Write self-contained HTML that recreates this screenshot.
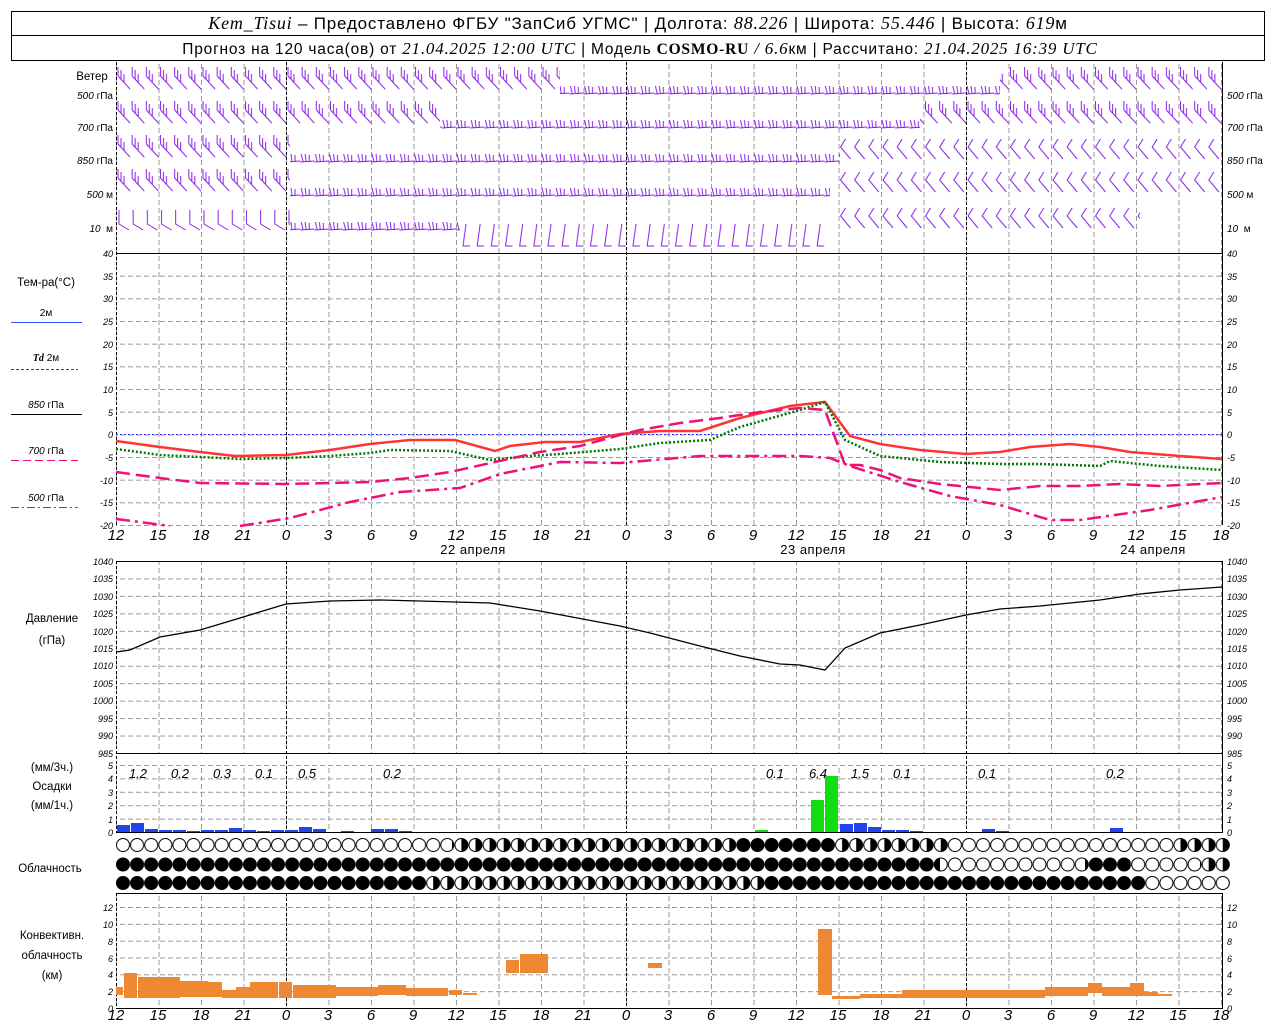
<!DOCTYPE html>
<html><head><meta charset="utf-8"><style>
body{margin:0;background:#fff;width:1280px;height:1024px;overflow:hidden;font-family:"Liberation Sans",sans-serif}
svg{position:absolute;left:0;top:0}
.s{font-family:"Liberation Sans",sans-serif;font-size:12px}
.i{font-family:"Liberation Serif",serif;font-style:italic}
.ax{font-family:"Liberation Sans",sans-serif;font-style:italic;font-size:9px}
.tx{font-family:"Liberation Sans",sans-serif;font-style:italic;font-size:15px}
</style></head><body>
<svg width="1280" height="1024" viewBox="0 0 1280 1024">
<defs>
<pattern id="vg" patternUnits="userSpaceOnUse" x="116" y="0" width="42.5" height="1024"><line x1="0.5" y1="0" x2="0.5" y2="1024" stroke="#999" stroke-dasharray="5,3"/></pattern>
<pattern id="hT" patternUnits="userSpaceOnUse" x="0" y="253" width="8" height="22.667"><line x1="0" y1="0.5" x2="5" y2="0.5" stroke="#999"/></pattern>
<pattern id="hP" patternUnits="userSpaceOnUse" x="0" y="561" width="8" height="17.455"><line x1="0" y1="0.5" x2="5" y2="0.5" stroke="#999"/></pattern>
<pattern id="hR" patternUnits="userSpaceOnUse" x="0" y="765" width="8" height="13.4"><line x1="0" y1="0.5" x2="5" y2="0.5" stroke="#999"/></pattern>
<pattern id="hC" patternUnits="userSpaceOnUse" x="0" y="907" width="8" height="16.83"><line x1="0" y1="0.5" x2="5" y2="0.5" stroke="#999"/></pattern>
<pattern id="bA" patternUnits="userSpaceOnUse" x="116" y="0" width="14.167" height="30"><path d="M2,10 L15,24 M2,10 L2,1 M5,13 L5,4 M8,16 L8,8" stroke="#8a1fe8" fill="none" stroke-width="1"/></pattern>
<pattern id="bB" patternUnits="userSpaceOnUse" x="116" y="0" width="14.167" height="30"><path d="M0,24 L14.2,23 M3,24 L1,16 M6,24 L5,16 M9,24 L9,17" stroke="#8a1fe8" fill="none"/></pattern>
<pattern id="bC" patternUnits="userSpaceOnUse" x="116" y="0" width="14.167" height="30"><path d="M3,4 L3,18 L13,24" stroke="#8a1fe8" fill="none"/></pattern>
<pattern id="bD" patternUnits="userSpaceOnUse" x="116" y="0" width="14.167" height="30"><path d="M7,2 L2,10 L12,22" stroke="#8a1fe8" fill="none"/></pattern>
<pattern id="bE" patternUnits="userSpaceOnUse" x="116" y="0" width="14.167" height="30"><path d="M10,2 L7,24 L14,24" stroke="#8a1fe8" fill="none"/></pattern>
<pattern id="cw" patternUnits="userSpaceOnUse" x="116" y="0" width="14.1" height="1024"><circle cx="7" cy="845" r="6.5" fill="#fff" stroke="#000"/><circle cx="7" cy="864.5" r="6.5" fill="#fff" stroke="#000"/><circle cx="7" cy="883" r="6.5" fill="#fff" stroke="#000"/></pattern>
<pattern id="cb" patternUnits="userSpaceOnUse" x="116" y="0" width="14.1" height="1024"><circle cx="7" cy="845" r="6.5" fill="#000" stroke="#000"/><circle cx="7" cy="864.5" r="6.5" fill="#000" stroke="#000"/><circle cx="7" cy="883" r="6.5" fill="#000" stroke="#000"/></pattern>
<pattern id="ch" patternUnits="userSpaceOnUse" x="116" y="0" width="14.1" height="1024"><circle cx="7" cy="845" r="6.5" fill="#fff" stroke="#000"/><path d="M7,838.5 A6.5,6.5 0 0 1 7,851.5 Z" fill="#000"/><circle cx="7" cy="864.5" r="6.5" fill="#fff" stroke="#000"/><path d="M7,858 A6.5,6.5 0 0 1 7,871 Z" fill="#000"/><circle cx="7" cy="883" r="6.5" fill="#fff" stroke="#000"/><path d="M7,876.5 A6.5,6.5 0 0 1 7,889.5 Z" fill="#000"/></pattern>
</defs>

<!-- header -->
<rect x="11.5" y="11.5" width="1253" height="49" fill="none" stroke="#000"/>
<line x1="11" y1="35.5" x2="1265" y2="35.5" stroke="#000"/>
<text x="638" y="29" text-anchor="middle" class="s" style="font-size:17px;letter-spacing:0.8px"><tspan class="i" font-size="18">Kem_Tisui</tspan> – Предоставлено ФГБУ "ЗапСиб УГМС" | Долгота: <tspan class="i" font-size="18">88.226</tspan> | Широта: <tspan class="i" font-size="18">55.446</tspan> | Высота: <tspan class="i" font-size="18">619</tspan>м</text>
<text x="640" y="54" text-anchor="middle" class="s" style="font-size:15.5px;letter-spacing:0.8px">Прогноз на 120 часа(ов) от <tspan class="i" font-size="17">21.04.2025 12:00 UTC</tspan> | Модель <tspan font-family="Liberation Serif" font-weight="bold">COSMO-RU</tspan> <tspan class="i" font-size="17">/ 6.6</tspan>км | Рассчитано: <tspan class="i" font-size="17">21.04.2025 16:39 UTC</tspan></text>

<!-- vertical grids -->
<rect x="116" y="62" width="1107" height="191" fill="url(#vg)"/>
<rect x="116" y="253" width="1107" height="272" fill="url(#vg)"/>
<rect x="116" y="561" width="1107" height="192" fill="url(#vg)"/>
<rect x="116" y="765" width="1107" height="67" fill="url(#vg)"/>
<rect x="116" y="893" width="1107" height="115" fill="url(#vg)"/>
<!-- horizontal grids -->
<rect x="116" y="253" width="1107" height="273" fill="url(#hT)"/>
<rect x="116" y="561" width="1107" height="193" fill="url(#hP)"/>
<rect x="116" y="765" width="1107" height="68" fill="url(#hR)"/>
<rect x="116" y="907" width="1107" height="102" fill="url(#hC)"/>
<!-- day lines -->
<g stroke="#000" stroke-dasharray="3,2">
<path d="M286.5,62V525M626.5,62V525M966.5,62V525M286.5,561V832M626.5,561V832M966.5,561V832M286.5,893V1008M626.5,893V1008M966.5,893V1008M116.5,62V525M116.5,561V832M116.5,893V1008"/>
</g>
<g stroke="#000" fill="none">
<path d="M116,253.5H1223M1222.5,62V525M1222.5,561V832M1222.5,893V1008M116,832.5H1223M116,893.5H1223M116,1008.5H1223M116,561.5H1223M116,753.5H1223"/>
</g>

<!-- wind barbs -->
<g>
<rect x="116" y="0" width="444" height="30" fill="url(#bA)" transform="translate(0,66)"/>
<rect x="560" y="0" width="440" height="30" fill="url(#bB)" transform="translate(0,70)"/>
<rect x="1000" y="0" width="222" height="30" fill="url(#bA)" transform="translate(0,66)"/>
<rect x="116" y="0" width="324" height="30" fill="url(#bA)" transform="translate(0,100)"/>
<rect x="440" y="0" width="480" height="30" fill="url(#bB)" transform="translate(0,104)"/>
<rect x="920" y="0" width="302" height="30" fill="url(#bA)" transform="translate(0,100)"/>
<rect x="116" y="0" width="174" height="30" fill="url(#bA)" transform="translate(0,134)"/>
<rect x="290" y="0" width="550" height="30" fill="url(#bB)" transform="translate(0,138)"/>
<rect x="840" y="0" width="382" height="30" fill="url(#bD)" transform="translate(0,137)"/>
<rect x="116" y="0" width="174" height="30" fill="url(#bA)" transform="translate(0,168)"/>
<rect x="290" y="0" width="540" height="30" fill="url(#bB)" transform="translate(0,172)"/>
<rect x="840" y="0" width="382" height="30" fill="url(#bD)" transform="translate(0,170)"/>
<rect x="116" y="0" width="174" height="30" fill="url(#bC)" transform="translate(0,206)"/>
<rect x="290" y="0" width="170" height="30" fill="url(#bB)" transform="translate(0,206)"/>
<rect x="460" y="0" width="370" height="30" fill="url(#bE)" transform="translate(0,222)"/>
<rect x="840" y="0" width="300" height="30" fill="url(#bD)" transform="translate(0,206)"/>
</g>

<!-- zero line temp -->
<line x1="116" y1="434.5" x2="1222" y2="434.5" stroke="#3333ff" stroke-dasharray="2,2"/>
<!-- temp curves -->
<polyline fill="none" stroke="#ff3333" stroke-width="2.5" points="116,441 160,447 200,452 235,456 286,455 330,450 370,444 410,440 455,440 495,451 510,446 545,442 580,442 620,434 660,431 700,431 740,418 790,406 825,402 850,436 880,444 920,450 966,454 1000,452 1030,447 1070,444 1100,447 1130,452 1180,456 1222,459"/>
<polyline fill="none" stroke="#007700" stroke-width="2.5" stroke-dasharray="2,2" points="116,449 160,455 240,459 286,458 330,456 370,453 390,450 450,451 490,460 530,456 560,454 620,449 660,443 710,440 740,427 800,410 825,402 845,440 880,456 940,462 1000,464 1040,464 1100,466 1110,461 1160,466 1222,470"/>
<polyline fill="none" stroke="#ee1177" stroke-width="2.5" stroke-dasharray="14,6" points="116,472 160,478 200,483 286,484 330,483 370,482 410,478 450,472 495,462 540,452 580,446 620,435 640,430 680,423 720,418 760,412 800,408 825,410 845,465 860,465 880,470 900,478 940,484 970,487 1000,490 1040,486 1080,486 1120,484 1160,486 1222,483"/>
<polyline fill="none" stroke="#ee1177" stroke-width="2.5" stroke-dasharray="14,5,3,5" points="116,519 140,522 170,526"/>
<polyline fill="none" stroke="#ee1177" stroke-width="2.5" stroke-dasharray="14,5,3,5" points="240,526 290,518 350,502 400,492 460,488 500,474 560,462 620,463 700,456 800,456 830,458 850,466 900,482 950,496 1000,505 1050,520 1080,520 1150,510 1222,497"/>

<!-- pressure -->
<polyline fill="none" stroke="#000" stroke-width="1.3" points="116,652 130,650 160,637 200,630 240,618 286,604 330,601 380,600 420,601 490,603 540,611 620,626 650,633 700,646 740,656 780,664 800,665 825,670 845,648 880,633 920,625 966,615 1000,609 1040,606 1100,600 1140,594 1180,590 1222,587"/>

<!-- precip bars -->
<g fill="#2244ee">
<rect x="117" y="825" width="13" height="7"/><rect x="131" y="823" width="13" height="9"/><rect x="145" y="829" width="13" height="3"/><rect x="159" y="830" width="13" height="2"/><rect x="173" y="830" width="13" height="2"/><rect x="187" y="831" width="13" height="1"/><rect x="201" y="830" width="13" height="2"/><rect x="215" y="830" width="13" height="2"/><rect x="229" y="828" width="13" height="4"/><rect x="243" y="830" width="13" height="2"/><rect x="257" y="831" width="13" height="1"/><rect x="271" y="830" width="13" height="2"/><rect x="285" y="830" width="13" height="2"/><rect x="299" y="827" width="13" height="5"/><rect x="313" y="829" width="13" height="3"/><rect x="341" y="831" width="13" height="1"/><rect x="371" y="829" width="13" height="3"/><rect x="385" y="829" width="13" height="3"/><rect x="399" y="831" width="13" height="1"/>
<rect x="840" y="824" width="13" height="8"/><rect x="854" y="823" width="13" height="9"/><rect x="868" y="827" width="13" height="5"/><rect x="882" y="830" width="13" height="2"/><rect x="896" y="830" width="13" height="2"/><rect x="910" y="831" width="13" height="1"/><rect x="982" y="829" width="13" height="3"/><rect x="996" y="831" width="13" height="1"/><rect x="1110" y="828" width="13" height="4"/>
</g>
<g fill="#11dd11"><rect x="755" y="830" width="13" height="2"/><rect x="811" y="800" width="13" height="32"/><rect x="825" y="776" width="13" height="56"/></g>
<g class="ax" style="font-size:13px" text-anchor="middle"><text x="138" y="778">1.2</text><text x="180" y="778">0.2</text><text x="222" y="778">0.3</text><text x="264" y="778">0.1</text><text x="307" y="778">0.5</text><text x="392" y="778">0.2</text><text x="775" y="778">0.1</text><text x="818" y="778">6.4</text><text x="860" y="778">1.5</text><text x="902" y="778">0.1</text><text x="987" y="778">0.1</text><text x="1115" y="778">0.2</text></g>

<!-- clouds -->
<rect x="116" y="837" width="336" height="16" fill="url(#cw)"/>
<rect x="452" y="837" width="283" height="16" fill="url(#ch)"/>
<rect x="735" y="837" width="100" height="16" fill="url(#cb)"/>
<rect x="835" y="837" width="115" height="16" fill="url(#ch)"/>
<rect x="950" y="837" width="230" height="16" fill="url(#cw)"/>
<rect x="1180" y="837" width="50" height="16" fill="url(#ch)"/>
<rect x="116" y="856" width="824" height="17" fill="url(#cb)"/>
<rect x="940" y="856" width="145" height="17" fill="url(#cw)"/>
<rect x="1085" y="856" width="45" height="17" fill="url(#cb)"/>
<rect x="1130" y="856" width="70" height="17" fill="url(#cw)"/>
<rect x="1200" y="856" width="30" height="17" fill="url(#ch)"/>
<rect x="116" y="875" width="304" height="17" fill="url(#cb)"/>
<rect x="420" y="875" width="340" height="17" fill="url(#ch)"/>
<rect x="760" y="875" width="385" height="17" fill="url(#cb)"/>
<rect x="1145" y="875" width="85" height="17" fill="url(#cw)"/>

<!-- convective -->
<g fill="#ee8833">
<rect x="116" y="987" width="7" height="8"/><rect x="124" y="973" width="13" height="25"/><rect x="138" y="977" width="42" height="21"/><rect x="180" y="981" width="28" height="16"/><rect x="208" y="982" width="14" height="15"/><rect x="222" y="990" width="14" height="8"/><rect x="236" y="987" width="14" height="11"/><rect x="250" y="982" width="28" height="16"/><rect x="279" y="982" width="13" height="16"/><rect x="293" y="985" width="43" height="13"/><rect x="336" y="987" width="42" height="9"/><rect x="378" y="985" width="28" height="10"/><rect x="406" y="988" width="42" height="8"/><rect x="449" y="990" width="13" height="5"/><rect x="463" y="993" width="14" height="2"/>
<rect x="506" y="960" width="13" height="13"/><rect x="520" y="954" width="28" height="19"/><rect x="648" y="963" width="14" height="5"/><rect x="818" y="929" width="14" height="66"/>
<rect x="832" y="996" width="28" height="3"/><rect x="860" y="994" width="42" height="4"/><rect x="902" y="990" width="58" height="8"/><rect x="960" y="990" width="85" height="8"/><rect x="1045" y="987" width="43" height="9"/><rect x="1088" y="983" width="14" height="10"/><rect x="1102" y="987" width="28" height="9"/><rect x="1130" y="983" width="14" height="13"/><rect x="1144" y="992" width="14" height="4"/><rect x="1158" y="994" width="14" height="2"/>
</g>

<!-- left labels -->
<g class="s" style="font-size:11.5px" text-anchor="middle">
<text x="92" y="80">Ветер</text>
<text x="46" y="286">Тем-ра(°С)</text>
<text x="46" y="316" font-size="10">2м</text>
<text x="46" y="361" font-size="10"><tspan class="i" font-weight="bold">Td</tspan> 2м</text>
<text x="46" y="408" font-size="10"><tspan class="ax" style="font-size:10px">850</tspan> гПа</text>
<text x="46" y="454" font-size="10"><tspan class="ax" style="font-size:10px">700</tspan> гПа</text>
<text x="46" y="501" font-size="10"><tspan class="ax" style="font-size:10px">500</tspan> гПа</text>
<text x="52" y="622">Давление</text>
<text x="52" y="644">(гПа)</text>
<text x="52" y="771">(мм/3ч.)</text>
<text x="52" y="790">Осадки</text>
<text x="52" y="809">(мм/1ч.)</text>
<text x="50" y="872">Облачность</text>
<text x="52" y="939">Конвективн.</text>
<text x="52" y="959">облачность</text>
<text x="52" y="979">(км)</text>
</g>
<g stroke-width="1">
<line x1="11" y1="322.5" x2="82" y2="322.5" stroke="#3355ff"/>
<line x1="11" y1="369.5" x2="78" y2="369.5" stroke="#007700" stroke-dasharray="3,2"/>
<line x1="11" y1="414.5" x2="82" y2="414.5" stroke="#000"/>
<line x1="11" y1="460.5" x2="78" y2="460.5" stroke="#ee1177" stroke-dasharray="8,4"/>
<line x1="11" y1="507.5" x2="78" y2="507.5" stroke="#ee1177" stroke-dasharray="8,3,2,3"/>
</g>
<g class="ax" style="font-size:10px" text-anchor="end">
<text x="113" y="99">500 <tspan font-style="normal">гПа</tspan></text><text x="113" y="131">700 <tspan font-style="normal">гПа</tspan></text><text x="113" y="164">850 <tspan font-style="normal">гПа</tspan></text><text x="113" y="198">500 <tspan font-style="normal">м</tspan></text><text x="113" y="232">10 &#160;<tspan font-style="normal">м</tspan></text>
</g>
<g class="ax" style="font-size:10px">
<text x="1227" y="99">500 <tspan font-style="normal">гПа</tspan></text><text x="1227" y="131">700 <tspan font-style="normal">гПа</tspan></text><text x="1227" y="164">850 <tspan font-style="normal">гПа</tspan></text><text x="1227" y="198">500 <tspan font-style="normal">м</tspan></text><text x="1227" y="232">10 &#160;<tspan font-style="normal">м</tspan></text>
</g>
<!-- temp axis -->
<g class="ax" text-anchor="end">
<text x="113" y="257">40</text><text x="113" y="280">35</text><text x="113" y="302">30</text><text x="113" y="325">25</text><text x="113" y="348">20</text><text x="113" y="370">15</text><text x="113" y="393">10</text><text x="113" y="416">5</text><text x="113" y="438">0</text><text x="113" y="461">-5</text><text x="113" y="484">-10</text><text x="113" y="506">-15</text><text x="113" y="529">-20</text>
<text x="113" y="565">1040</text><text x="113" y="582">1035</text><text x="113" y="600">1030</text><text x="113" y="617">1025</text><text x="113" y="635">1020</text><text x="113" y="652">1015</text><text x="113" y="669">1010</text><text x="113" y="687">1005</text><text x="113" y="704">1000</text><text x="113" y="722">995</text><text x="113" y="739">990</text><text x="113" y="757">985</text>
<text x="113" y="769">5</text><text x="113" y="782">4</text><text x="113" y="796">3</text><text x="113" y="809">2</text><text x="113" y="823">1</text><text x="113" y="836">0</text>
<text x="113" y="911">12</text><text x="113" y="928">10</text><text x="113" y="945">8</text><text x="113" y="962">6</text><text x="113" y="978">4</text><text x="113" y="995">2</text><text x="113" y="1012">0</text>
</g>
<g class="ax">
<text x="1227" y="257">40</text><text x="1227" y="280">35</text><text x="1227" y="302">30</text><text x="1227" y="325">25</text><text x="1227" y="348">20</text><text x="1227" y="370">15</text><text x="1227" y="393">10</text><text x="1227" y="416">5</text><text x="1227" y="438">0</text><text x="1227" y="461">-5</text><text x="1227" y="484">-10</text><text x="1227" y="506">-15</text><text x="1227" y="529">-20</text>
<text x="1227" y="565">1040</text><text x="1227" y="582">1035</text><text x="1227" y="600">1030</text><text x="1227" y="617">1025</text><text x="1227" y="635">1020</text><text x="1227" y="652">1015</text><text x="1227" y="669">1010</text><text x="1227" y="687">1005</text><text x="1227" y="704">1000</text><text x="1227" y="722">995</text><text x="1227" y="739">990</text><text x="1227" y="757">985</text>
<text x="1227" y="769">5</text><text x="1227" y="782">4</text><text x="1227" y="796">3</text><text x="1227" y="809">2</text><text x="1227" y="823">1</text><text x="1227" y="836">0</text>
<text x="1227" y="911">12</text><text x="1227" y="928">10</text><text x="1227" y="945">8</text><text x="1227" y="962">6</text><text x="1227" y="978">4</text><text x="1227" y="995">2</text><text x="1227" y="1012">0</text>
</g>
<!-- time axes -->
<g class="tx" text-anchor="middle">
<text x="116" y="540">12</text><text x="158" y="540">15</text><text x="201" y="540">18</text><text x="243" y="540">21</text><text x="286" y="540">0</text><text x="328" y="540">3</text><text x="371" y="540">6</text><text x="413" y="540">9</text><text x="456" y="540">12</text><text x="498" y="540">15</text><text x="541" y="540">18</text><text x="583" y="540">21</text><text x="626" y="540">0</text><text x="668" y="540">3</text><text x="711" y="540">6</text><text x="753" y="540">9</text><text x="796" y="540">12</text><text x="838" y="540">15</text><text x="881" y="540">18</text><text x="923" y="540">21</text><text x="966" y="540">0</text><text x="1008" y="540">3</text><text x="1051" y="540">6</text><text x="1093" y="540">9</text><text x="1136" y="540">12</text><text x="1178" y="540">15</text><text x="1221" y="540">18</text>
<text x="116" y="1020">12</text><text x="158" y="1020">15</text><text x="201" y="1020">18</text><text x="243" y="1020">21</text><text x="286" y="1020">0</text><text x="328" y="1020">3</text><text x="371" y="1020">6</text><text x="413" y="1020">9</text><text x="456" y="1020">12</text><text x="498" y="1020">15</text><text x="541" y="1020">18</text><text x="583" y="1020">21</text><text x="626" y="1020">0</text><text x="668" y="1020">3</text><text x="711" y="1020">6</text><text x="753" y="1020">9</text><text x="796" y="1020">12</text><text x="838" y="1020">15</text><text x="881" y="1020">18</text><text x="923" y="1020">21</text><text x="966" y="1020">0</text><text x="1008" y="1020">3</text><text x="1051" y="1020">6</text><text x="1093" y="1020">9</text><text x="1136" y="1020">12</text><text x="1178" y="1020">15</text><text x="1221" y="1020">18</text>
</g>
<g class="s" style="font-size:13px;letter-spacing:0.5px" text-anchor="middle">
<text x="473" y="554">22 апреля</text><text x="813" y="554">23 апреля</text><text x="1153" y="554">24 апреля</text>
</g>
</svg>
</body></html>
